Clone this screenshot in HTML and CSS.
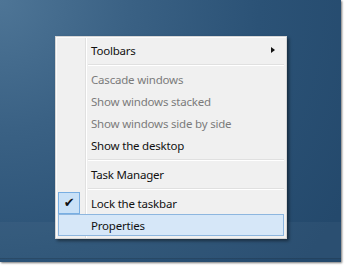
FILE: index.html
```html
<!DOCTYPE html>
<html lang="en">

<head>
    <meta charset="UTF-8">
    <title>Taskbar menu</title>
    <link rel="stylesheet" href="styles.css">
</head>

<body>
    <div class="desktop">
        <div class="menu">
            <div class="item">Toolbars<span class="arrow"></span></div>
            <div class="sep"></div>
            <div class="item disabled">Cascade windows</div>
            <div class="item disabled">Show windows stacked</div>
            <div class="item disabled">Show windows side by side</div>
            <div class="item">Show the desktop</div>
            <div class="sep"></div>
            <div class="item">Task Manager</div>
            <div class="sep"></div>
            <div class="item"><span class="check">&#10004;</span>Lock the taskbar</div>
            <div class="item hover">Properties</div>
        </div>
        <div class="taskbar"></div>
    </div>
</body>

</html>
```

FILE: styles.css
```css
* {
    box-sizing: border-box;
}

body {
    margin: 0;
    width: 345px;
    height: 266px;
    background: #fff;
    font-family: "Noto Sans", "Open Sans", sans-serif;
    font-size: 11.5px;
    letter-spacing: -0.2px;
    overflow: hidden;
}

.desktop {
    position: relative;
    width: 341px;
    height: 262px;
    padding: 36px 0 0 55px;
    background: radial-gradient(circle at 0 0, #4e7596 0, #3a6184 130px, #2b5276 260px, #24496c 400px);
    box-shadow: 1px 1px 2px rgba(0, 0, 0, 0.55);
}

/* lighter band at the bottom, under the menu */
.taskbar {
    position: absolute;
    left: 0;
    right: 0;
    top: 222px;
    height: 37px;
    background: rgba(255, 255, 255, 0.035);
    border-bottom: 1px solid rgba(0, 0, 0, 0.15);
}

.menu {
    position: relative;
    z-index: 1;
    width: 232px;
    padding: 2px;
    border: 1px solid #d6d6d6;
    background:
        linear-gradient(to right, transparent 29px, #e0e0e0 29px, #e0e0e0 30px, #fff 30px, #fff 31px, transparent 31px),
        #f0f0f0;
    box-shadow: 2px 2px 3px rgba(0, 0, 0, 0.45), inset 1px 1px 0 #fbfbfb;
}

.item {
    position: relative;
    height: 22px;
    line-height: 21px;
    padding-left: 32px;
    color: #111;
    border: 1px solid transparent;
}

.disabled {
    color: #7b7b7b;
}

.hover {
    background: #d6e7f8;
    border-color: #8db6df;
}

.check {
    position: absolute;
    left: -1px;
    top: -1px;
    width: 22px;
    height: 22px;
    line-height: 20px;
    text-align: center;
    font-family: "DejaVu Sans", sans-serif;
    font-size: 13px;
    font-weight: bold;
    color: #111;
    background: #c9e1f7;
    border: 1px solid #78aee2;
}

.arrow {
    position: absolute;
    right: 8px;
    top: 7px;
    width: 0;
    height: 0;
    border-left: 4px solid #111;
    border-top: 3.5px solid transparent;
    border-bottom: 3.5px solid transparent;
}

.sep {
    height: 7px;
    margin-left: 30px;
    background: linear-gradient(to bottom, transparent 3px, #e0e0e0 3px, #e0e0e0 4px, #fff 4px, #fff 5px, transparent 5px);
}
```
